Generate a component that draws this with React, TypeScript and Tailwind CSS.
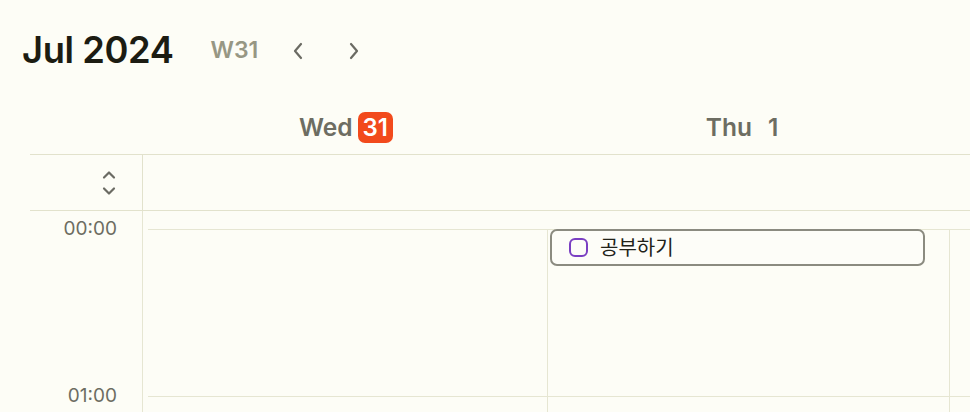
import React from "react";

function ChevronLeft() {
  return (
    <svg width="14" height="20" viewBox="0 0 14 20" fill="none">
      <path d="M10 3l-6 7 6 7" stroke="#6b6b63" strokeWidth="2.2" strokeLinecap="round" strokeLinejoin="round" />
    </svg>
  );
}
function ChevronRight() {
  return (
    <svg width="14" height="20" viewBox="0 0 14 20" fill="none">
      <path d="M4 3l6 7-6 7" stroke="#6b6b63" strokeWidth="2.2" strokeLinecap="round" strokeLinejoin="round" />
    </svg>
  );
}
function UpDown() {
  return (
    <svg width="16" height="30" viewBox="0 0 16 30" fill="none">
      <path d="M3 9.5L8 4.5l5 5" stroke="#6b6b63" strokeWidth="2.2" strokeLinecap="round" strokeLinejoin="round" />
      <path d="M3 20.5L8 25.5l5-5" stroke="#6b6b63" strokeWidth="2.2" strokeLinecap="round" strokeLinejoin="round" />
    </svg>
  );
}

export default function App() {
  return (
    <div
      className="w-[970px] h-[412px] overflow-hidden bg-[#fdfdf6] text-[#1f1f16]"
      style={{ fontFamily: "Inter, 'Noto Sans CJK KR', sans-serif" }}
    >
      {/* Top bar */}
      <div className="h-[100px] flex items-center pl-[22px]">
        <div className="text-[36.3px] font-semibold tracking-[-0.4px] text-[#1c1c12]">Jul 2024</div>
        <div className="ml-[37px] text-[23px] font-semibold text-[#979784] mt-[1px]">W31</div>
        <button className="ml-[33px] mt-[2px] flex items-center"><ChevronLeft /></button>
        <button className="ml-[42px] mt-[2px] flex items-center"><ChevronRight /></button>
      </div>

      {/* Day headers */}
      <div className="ml-[30px] flex h-[55px] border-b border-[#e2e2cc]">
        <div className="w-[118px] shrink-0" />
        <div className="w-[400px] shrink-0 flex items-center justify-center gap-[5px] pt-[1px] pr-[4px]">
          <span className="text-[24.5px] font-semibold text-[#6d6d62]">Wed</span>
          <span className="h-[31px] px-[5px] rounded-[7px] bg-[#f24a1c] text-white text-[24px] font-semibold flex items-center leading-none">31</span>
        </div>
        <div className="w-[402px] shrink-0 flex items-center justify-center pt-[1px] pr-[14px]">
          <span className="text-[24.5px] font-semibold text-[#6d6d62]">Thu</span>
          <span className="ml-[16px] text-[24.5px] font-semibold text-[#6d6d62]">1</span>
        </div>
      </div>

      {/* All-day row */}
      <div className="ml-[30px] flex h-[56px] border-b border-[#e2e2cc]">
        <div className="w-[113px] shrink-0 border-r border-[#e2e2cc] flex items-center justify-end pr-[25px]">
          <UpDown />
        </div>
        <div className="flex-1" />
      </div>

      {/* Time grid */}
      <div className="ml-[30px] flex pt-[18px]">
        <div className="w-[113px] shrink-0 border-r border-[#e6e6d2] -mt-[18px] pt-[18px]">
          <div className="h-[167px] relative">
            <span className="absolute right-[25px] -top-[14px] text-[19px] text-[#6d6d62]">00:00</span>
          </div>
          <div className="h-[167px] relative">
            <span className="absolute right-[25px] -top-[14px] text-[19px] text-[#6d6d62]">01:00</span>
          </div>
        </div>
        <div className="w-[5px] shrink-0" />
        <div className="w-[400px] shrink-0 border-r border-[#e6e6d2]">
          <div className="h-[167px] border-t border-[#e6e6d2]" />
          <div className="h-[167px] border-t border-[#e6e6d2]" />
        </div>
        <div className="w-[402px] shrink-0 border-r border-[#e6e6d2] relative">
          <div className="h-[167px] border-t border-[#e6e6d2]" />
          <div className="h-[167px] border-t border-[#e6e6d2]" />
          <div className="absolute left-[2px] top-0 w-[375px] h-[37px] rounded-[7px] border-2 border-[#8b8b80] bg-[#fdfdf8] flex items-center pl-[17px]">
            <span className="w-[19px] h-[19px] rounded-[6px] border-2 border-[#7a3fc2]" />
            <span className="ml-[12px] text-[20px] text-[#222218]">공부하기</span>
          </div>
        </div>
        <div className="flex-1">
          <div className="h-[167px] border-t border-[#e6e6d2]" />
          <div className="h-[167px] border-t border-[#e6e6d2]" />
        </div>
      </div>
    </div>
  );
}
